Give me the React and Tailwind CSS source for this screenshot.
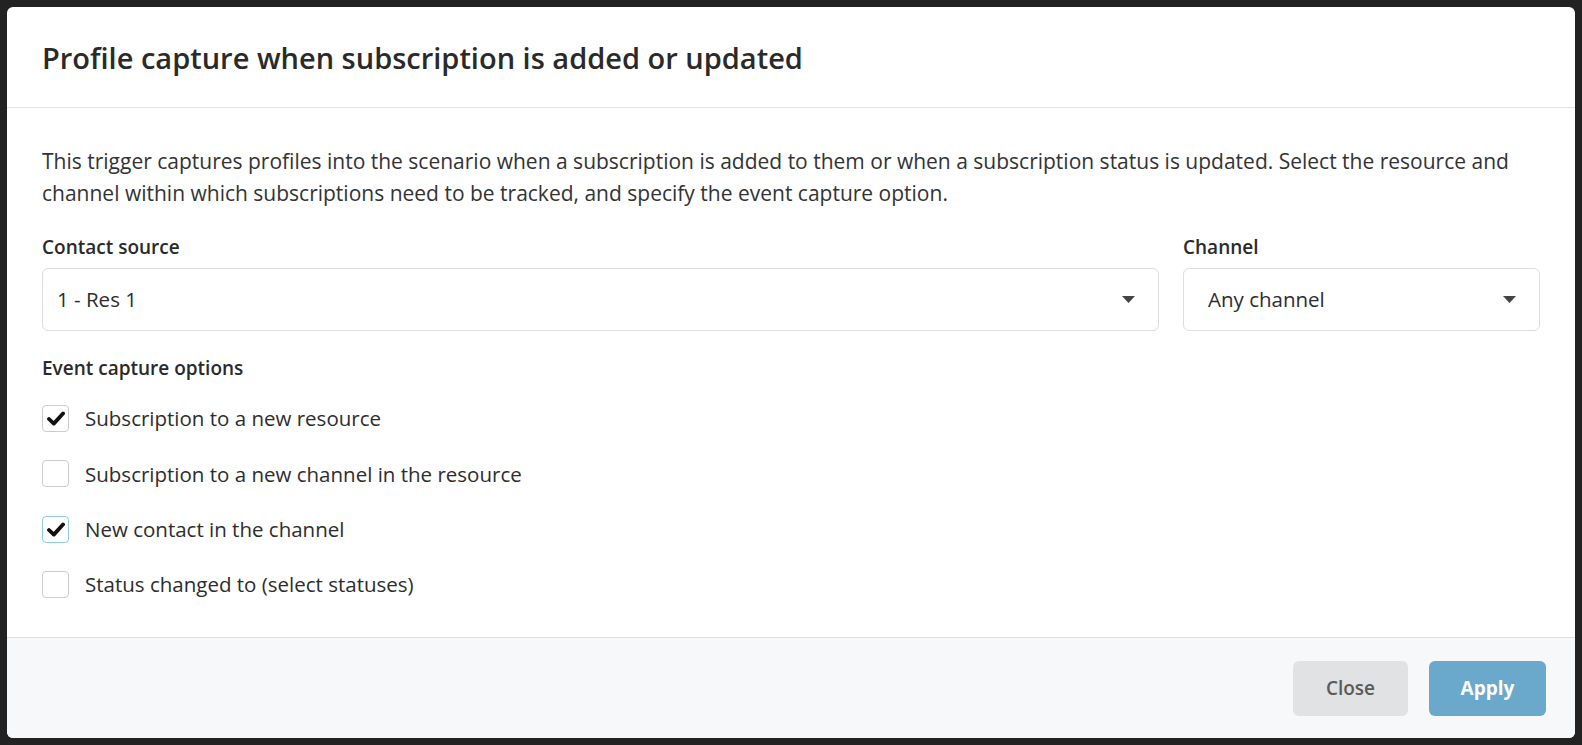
const options = [
  { label: "Subscription to a new resource", checked: true },
  { label: "Subscription to a new channel in the resource", checked: false },
  { label: "New contact in the channel", checked: true, focused: true },
  { label: "Status changed to (select statuses)", checked: false },
];

function Caret() {
  return (
    <svg width="13" height="7" viewBox="0 0 13 7" className="shrink-0">
      <path d="M0 0h13L6.5 7z" fill="#444" />
    </svg>
  );
}

function Select({ value, className }) {
  return (
    <div
      className={
        "flex h-[63px] items-center justify-between rounded-md border border-[#dddddd] bg-white pr-[23px] text-[20.5px] text-[#2d2d2d] " +
        className
      }
    >
      <span>{value}</span>
      <Caret />
    </div>
  );
}

function Checkbox({ checked, focused }) {
  return (
    <div
      className={
        "flex h-[27px] w-[27px] shrink-0 items-center justify-center rounded-[4px] border bg-white " +
        (focused ? "border-[#93c9e0]" : "border-[#cccccc]")
      }
    >
      {checked && (
        <svg width="18" height="15" viewBox="0 0 18 15">
          <path
            d="M2 8l4.8 4.6L16 2.5"
            fill="none"
            stroke="#111"
            strokeWidth="3.8"
            strokeLinecap="round"
            strokeLinejoin="round"
          />
        </svg>
      )}
    </div>
  );
}

export default function App() {
  return (
    <div className="h-[745px] w-full bg-[#212221] p-[7px] font-['Open_Sans',sans-serif]">
      <div className="flex h-full flex-col overflow-hidden rounded-md bg-white">
        <div className="flex h-[101px] shrink-0 items-center border-b border-[#e2e2e2] px-[35px] pt-[2px]">
          <h2 className="text-[29px] font-semibold text-[#2a2a2a]">
            Profile capture when subscription is added or updated
          </h2>
        </div>

        <div className="flex-1 px-[35px] pt-[37px]">
          <p className="text-[21px] leading-[32px] text-[#333]">
            This trigger captures profiles into the scenario when a subscription is added to them or when a
            subscription status is updated. Select the resource and channel within which subscriptions need to be
            tracked, and specify the event capture option.
          </p>

          <div className="mt-[25px] flex gap-[24px]">
            <div className="flex-1">
              <div className="mb-[8px] text-[19px] font-semibold leading-[26px] text-[#2a2a2a]">Contact source</div>
              <Select value="1 - Res 1" className="pl-[14px]" />
            </div>
            <div className="w-[357px]">
              <div className="mb-[8px] text-[19px] font-semibold leading-[26px] text-[#2a2a2a]">Channel</div>
              <Select value="Any channel" className="pl-[24px]" />
            </div>
          </div>

          <div className="mt-[24px] text-[19px] font-semibold leading-[26px] text-[#2a2a2a]">
            Event capture options
          </div>
          <div className="mt-[10px]">
            {options.map((o) => (
              <label key={o.label} className="flex h-[55.3px] items-center gap-[16px]">
                <Checkbox checked={o.checked} focused={o.focused} />
                <span className="text-[20.5px] text-[#2d2d2d]">{o.label}</span>
              </label>
            ))}
          </div>
        </div>

        <div className="flex h-[101px] shrink-0 items-center justify-end gap-[21px] border-t border-[#dcdee2] bg-[#f7f8fa] pr-[29px]">
          <button className="h-[55px] w-[115px] rounded-md bg-[#e1e2e4] text-[19px] font-semibold text-[#5a5a5a]">
            Close
          </button>
          <button className="h-[55px] w-[117px] rounded-md bg-[#6aa9cb] text-[19px] font-bold text-white">
            Apply
          </button>
        </div>
      </div>
    </div>
  );
}
